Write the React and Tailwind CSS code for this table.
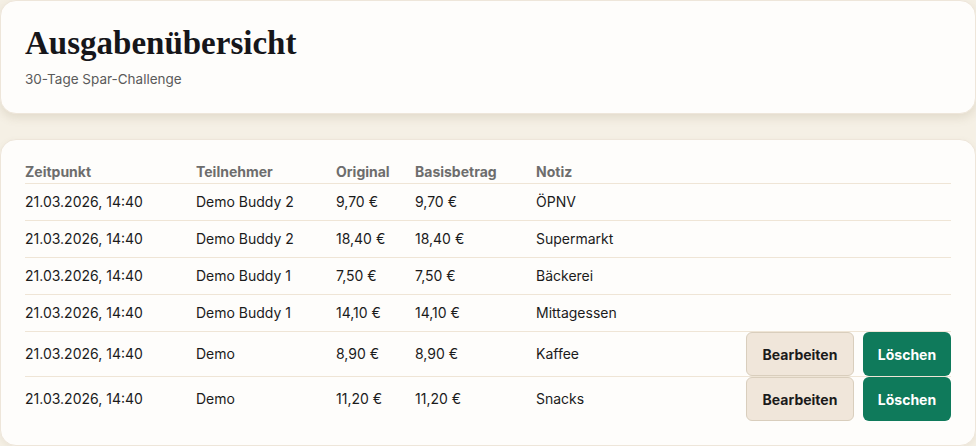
import React from "react";

const rows = [
  ["21.03.2026, 14:40", "Demo Buddy 2", "9,70 €", "9,70 €", "ÖPNV", false],
  ["21.03.2026, 14:40", "Demo Buddy 2", "18,40 €", "18,40 €", "Supermarkt", false],
  ["21.03.2026, 14:40", "Demo Buddy 1", "7,50 €", "7,50 €", "Bäckerei", false],
  ["21.03.2026, 14:40", "Demo Buddy 1", "14,10 €", "14,10 €", "Mittagessen", false],
  ["21.03.2026, 14:40", "Demo", "8,90 €", "8,90 €", "Kaffee", true],
  ["21.03.2026, 14:40", "Demo", "11,20 €", "11,20 €", "Snacks", true],
];

export default function App() {
  return (
    <div
      className="min-h-[446px] w-[976px] bg-[#f5f0e5] flex flex-col gap-[25px] overflow-hidden"
      style={{ fontFamily: "Inter, 'Liberation Sans', sans-serif" }}
    >
      <div className="h-[114px] rounded-2xl border border-[#eee6da] bg-[#fefdfb] px-6 pt-[22px] shadow-[0_4px_10px_rgba(120,100,60,0.15)]">
        <h1
          className="text-[33px] leading-[40px] font-bold text-[#16161a]"
          style={{ fontFamily: "'Liberation Serif', serif" }}
        >
          Ausgabenübersicht
        </h1>
        <p className="mt-[8px] text-[13.5px] leading-4 text-[#5a5a5a]">30-Tage Spar-Challenge</p>
      </div>

      <div className="rounded-2xl border border-[#eee6da] bg-[#fefdfb] px-6 pt-6 pb-6 shadow-[0_2px_6px_rgba(120,100,60,0.08)]">
        <table className="w-full table-fixed border-collapse text-[14px] text-[#1b1b1b]">
          <colgroup>
            <col className="w-[171px]" />
            <col className="w-[140px]" />
            <col className="w-[79px]" />
            <col className="w-[121px]" />
            <col />
            <col className="w-[205px]" />
          </colgroup>
          <thead>
            <tr className="border-b border-[#efe5d6]">
              {["Zeitpunkt", "Teilnehmer", "Original", "Basisbetrag", "Notiz", ""].map((h, i) => (
                <th key={i} className="text-left font-bold text-[14px] leading-4 pb-[3px] text-[#6d6d6d] p-0">
                  {h}
                </th>
              ))}
            </tr>
          </thead>
          <tbody>
            {rows.map((r, i) => (
              <tr key={i} className={i < rows.length - 1 ? "border-b border-[#efe5d6]" : ""}>
                {r.slice(0, 5).map((c, j) => (
                  <td key={j} className="py-2 leading-5 whitespace-nowrap">
                    {c}
                  </td>
                ))}
                <td className="p-0">
                  {r[5] && (
                    <div className="flex justify-end gap-[9px] pr-0">
                      <button className="h-[44px] w-[108px] rounded-md border border-[#d9cebd] bg-[#f0e6da] text-[14px] font-bold text-[#1b1b1b]">
                        Bearbeiten
                      </button>
                      <button className="h-[44px] w-[88px] rounded-md bg-[#0f7a5b] text-[14px] font-bold text-white">
                        Löschen
                      </button>
                    </div>
                  )}
                </td>
              </tr>
            ))}
          </tbody>
        </table>
      </div>
    </div>
  );
}
